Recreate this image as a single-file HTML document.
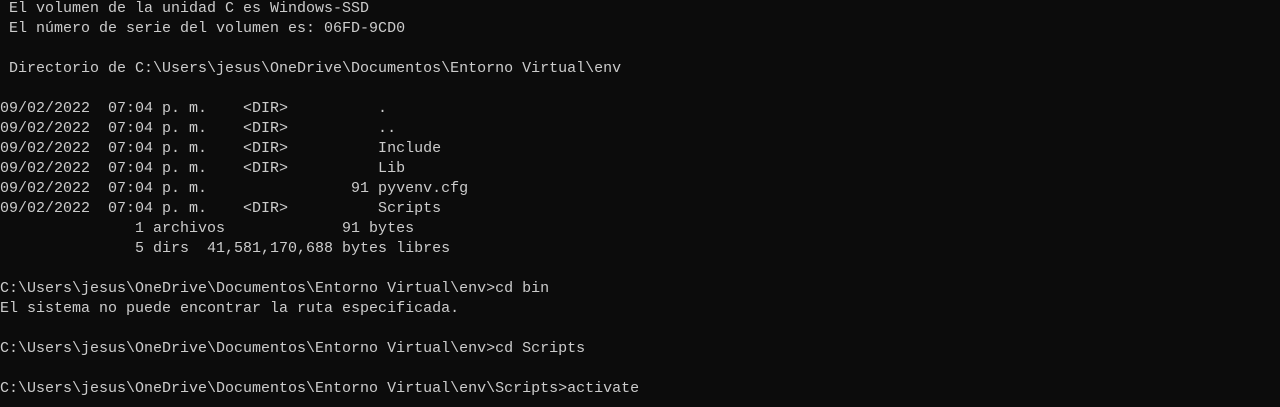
<!DOCTYPE html>
<html><head><meta charset="utf-8"><style>
html,body{margin:0;padding:0;background:#0c0c0c;width:1280px;height:407px;overflow:hidden}
pre{position:absolute;left:0;top:-1px;margin:0;font-family:"Liberation Mono",monospace;font-size:15px;line-height:20px;color:#cccccc;white-space:pre}
</style></head><body><pre> El volumen de la unidad C es Windows-SSD
 El número de serie del volumen es: 06FD-9CD0

 Directorio de C:\Users\jesus\OneDrive\Documentos\Entorno Virtual\env

09/02/2022  07:04 p. m.    &lt;DIR&gt;          .
09/02/2022  07:04 p. m.    &lt;DIR&gt;          ..
09/02/2022  07:04 p. m.    &lt;DIR&gt;          Include
09/02/2022  07:04 p. m.    &lt;DIR&gt;          Lib
09/02/2022  07:04 p. m.                91 pyvenv.cfg
09/02/2022  07:04 p. m.    &lt;DIR&gt;          Scripts
               1 archivos             91 bytes
               5 dirs  41,581,170,688 bytes libres

C:\Users\jesus\OneDrive\Documentos\Entorno Virtual\env&gt;cd bin
El sistema no puede encontrar la ruta especificada.

C:\Users\jesus\OneDrive\Documentos\Entorno Virtual\env&gt;cd Scripts

C:\Users\jesus\OneDrive\Documentos\Entorno Virtual\env\Scripts&gt;activate
</pre></body></html>
